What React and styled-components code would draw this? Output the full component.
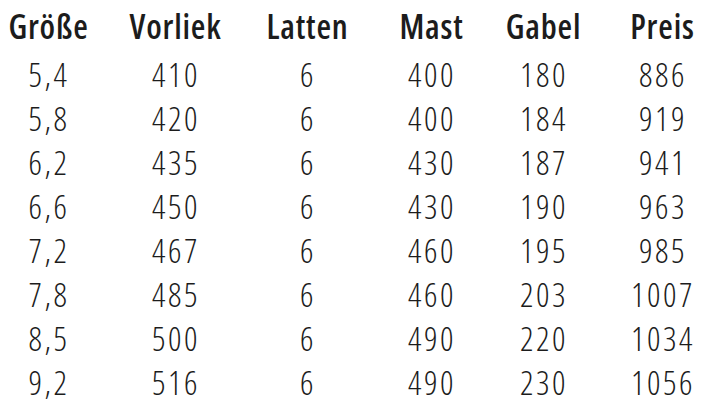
import React from "react";
import styled, { createGlobalStyle } from "styled-components";

const rows = [
  ["5,4", "410", "6", "400", "180", "886"],
  ["5,8", "420", "6", "400", "184", "919"],
  ["6,2", "435", "6", "430", "187", "941"],
  ["6,6", "450", "6", "430", "190", "963"],
  ["7,2", "467", "6", "460", "195", "985"],
  ["7,8", "485", "6", "460", "203", "1007"],
  ["8,5", "500", "6", "490", "220", "1034"],
  ["9,2", "516", "6", "490", "230", "1056"]
];

const headers = ["Größe", "Vorliek", "Latten", "Mast", "Gabel", "Preis"];

const App = () => (
  <>
    <GlobalStyle />
    <Table>
      {headers.map((h, i) => (
        <Head key={h} last={i === headers.length - 1}>
          {h}
        </Head>
      ))}
      {rows.map((row, r) =>
        row.map((v, i) => (
          <Cell key={r + "-" + i} last={i === row.length - 1}>
            {v}
          </Cell>
        ))
      )}
    </Table>
  </>
);

const GlobalStyle = createGlobalStyle`
  html, body {
    margin: 0;
    background: #ffffff;
    overflow: hidden;
  }
`;

const Table = styled.div`
  display: grid;
  grid-template-columns: 96px 158px 106px 142px 82px 128px;
  grid-template-rows: 52px repeat(8, 44px);
  width: 712px;
  height: 417px;
  color: #1c1c1c;
  font-family: "Open Sans", sans-serif;
`;

const Head = styled.div`
  display: flex;
  align-items: center;
  justify-content: center;
  padding-left: ${(p) => (p.last ? "29px" : "1px")};
  font-size: 33.5px;
  font-weight: 600;
  font-stretch: 75%;
  letter-spacing: 0.8px;
`;

const Cell = styled.div`
  display: flex;
  align-items: center;
  justify-content: center;
  padding-left: ${(p) => (p.last ? "30px" : "2px")};
  font-size: 33px;
  font-weight: 300;
  font-stretch: 75%;
  letter-spacing: 2.6px;
`;

export default App;
